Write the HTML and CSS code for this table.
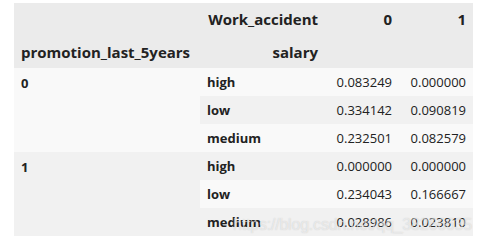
FILE: index.html
```html
<!DOCTYPE html>
<html>
<head>
<meta charset="utf-8">
<link rel="stylesheet" href="styles.css">
</head>
<body>
<div class="wrap">
<table class="df">
  <colgroup>
    <col class="c-idx0">
    <col class="c-idx1">
    <col class="c-val">
    <col class="c-val">
  </colgroup>
  <thead>
    <tr class="hrow1">
      <th></th>
      <th class="r">Work_accident</th>
      <th class="r">0</th>
      <th class="r">1</th>
    </tr>
    <tr class="hrow2">
      <th class="l">promotion_last_5years</th>
      <th class="r">salary</th>
      <th></th>
      <th></th>
    </tr>
  </thead>
  <tbody>
    <tr class="odd">
      <th class="lvl0 odd" rowspan="3">0</th>
      <th class="lvl1">high</th>
      <td>0.083249</td>
      <td>0.000000</td>
    </tr>
    <tr class="even">
      <th class="lvl1">low</th>
      <td>0.334142</td>
      <td>0.090819</td>
    </tr>
    <tr class="odd">
      <th class="lvl1">medium</th>
      <td>0.232501</td>
      <td>0.082579</td>
    </tr>
    <tr class="even">
      <th class="lvl0 even" rowspan="3">1</th>
      <th class="lvl1">high</th>
      <td>0.000000</td>
      <td>0.000000</td>
    </tr>
    <tr class="odd">
      <th class="lvl1">low</th>
      <td>0.234043</td>
      <td>0.166667</td>
    </tr>
    <tr class="even">
      <th class="lvl1">medium</th>
      <td>0.028986</td>
      <td>0.023810</td>
    </tr>
  </tbody>
</table>
<div class="watermark">https://blog.csdn.net/qq_38266635</div>
</div>
</body>
</html>
```
FILE: styles.css
```css
html, body {
  margin: 0;
  padding: 0;
  background: #ffffff;
}
body {
  padding: 3px 0 0 14px;
  font-family: "Open Sans", "Noto Sans", sans-serif;
  color: #222;
}
.wrap {
  position: relative;
  width: 459px;
}
.df {
  border-collapse: collapse;
  border-spacing: 0;
  table-layout: fixed;
  width: 459px;
}
.c-idx0 { width: 186px; }
.c-idx1 { width: 125px; }
.c-val { width: 74px; }
.df th, .df td {
  padding: 0 7px;
  white-space: nowrap;
  vertical-align: middle;
}
.df thead th {
  background: #ebebeb;
  font-weight: 700;
  font-size: 15px;
}
.hrow1 th { height: 32px; }
.hrow2 th { height: 33px; }
.df .r { text-align: right; }
.df .l { text-align: left; }
.df tbody th, .df tbody td {
  height: 28px;
  font-size: 13px;
}
.df tbody th {
  text-align: left;
  font-weight: 700;
}
.df tbody td { text-align: right; }
.df tbody .lvl0 { vertical-align: top; padding-top: 6px; }
.odd, .odd th.lvl1, .odd td { background: #f9f9f9; }
.even, .even th.lvl1, .even td { background: #f1f1f1; }
.lvl0.odd { background: #f9f9f9; }
.lvl0.even { background: #f1f1f1; }
.watermark {
  position: absolute;
  left: 219px;
  top: 212px;
  font-family: "Liberation Sans", Arial, sans-serif;
  font-size: 16px;
  line-height: 20px;
  letter-spacing: -0.2px;
  color: rgba(255, 255, 255, 0.55);
  text-shadow: 0 0 1px rgba(120, 120, 120, 0.35);
  white-space: nowrap;
  pointer-events: none;
}
```
